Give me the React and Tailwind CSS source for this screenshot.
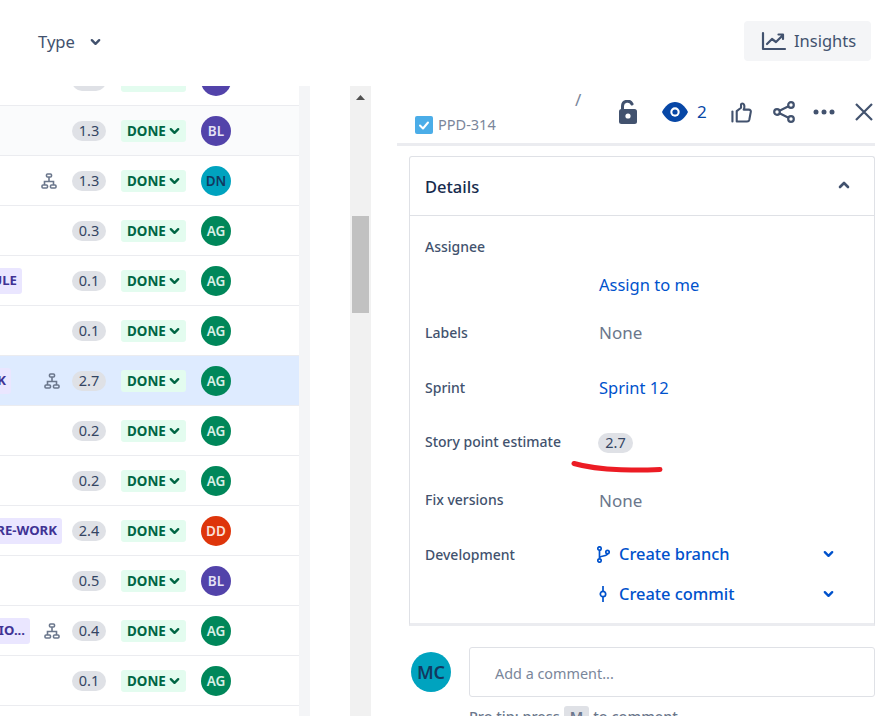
const rows = [
  { est: '1.2', who: '', avatar: 'bg-[#5243aa]' },
  { est: '1.3', who: 'BL', bg: 'bg-[#fafbfc]' },
  { est: '1.3', who: 'DN', tree: 'mr-[15px]' },
  { est: '0.3', who: 'AG' },
  { est: '0.1', who: 'AG', tag: 'ULE', tagWidth: 'w-[22px]' },
  { est: '0.1', who: 'AG' },
  { est: '2.7', who: 'AG', tag: 'K', tagWidth: 'w-[11px]', tree: 'mr-[12px]', bg: 'bg-[#deebff]' },
  { est: '0.2', who: 'AG' },
  { est: '0.2', who: 'AG' },
  { est: '2.4', who: 'DD', tag: 'RE-WORK', tagWidth: 'w-[62px]' },
  { est: '0.5', who: 'BL' },
  { est: '0.4', who: 'AG', tag: 'IO...', tagWidth: 'w-[30px]', tree: 'mr-[12px]' },
  { est: '0.1', who: 'AG' },
]

const avatarColors = {
  BL: 'bg-[#5243aa] text-[#e4e1f5]',
  DN: 'bg-[#00a3bf] text-[#12395f]',
  AG: 'bg-[#00875a] text-[#d9f0e6]',
  DD: 'bg-[#de350b] text-[#fbe0d9]',
}

const Chevron = ({ className = '', up = false }) => (
  <svg viewBox="0 0 12 8" className={className} fill="none" stroke="currentColor" strokeWidth="2.6" strokeLinecap="round" strokeLinejoin="round">
    <path d={up ? 'M2 6l4-4 4 4' : 'M2 2l4 4 4-4'} />
  </svg>
)

const TreeIcon = ({ className = '' }) => (
  <svg viewBox="0 0 16 16" className={className} fill="none" stroke="#6b778c" strokeWidth="1.6">
    <rect x="5.5" y="1" width="5" height="3" rx="1" />
    <path d="M8 4v4M3.500 12V8.500h9V12" />
    <rect x="1" y="12" width="5.500" height="3" rx="1" />
    <rect x="9.500" y="12" width="5.500" height="3" rx="1" />
  </svg>
)

const Row = ({ row }) => (
  <div className={`flex items-center h-[50px] pt-px border-b border-[#ebecf0] ${row.bg || 'bg-white'}`}>
    {row.tag && (
      <div className={`${row.tagWidth} flex justify-end overflow-hidden`}>
        <span className="shrink-0 h-[26px] px-[5px] flex items-center rounded-[3px] bg-[#eae6ff] text-[#403294] text-[13.2px] font-bold whitespace-nowrap">
          {row.tag}
        </span>
      </div>
    )}
    <div className="flex-1" />
    {row.tree && <TreeIcon className={`w-[16px] h-[16px] ${row.tree}`} />}
    <span className="w-[34px] h-[20px] flex items-center justify-center rounded-full bg-[#dfe1e6] text-[#344563] text-[14.5px]">
      {row.est}
    </span>
    <span className="ml-[15px] w-[65px] h-[22px] pl-[6px] flex items-center rounded-[3px] bg-[#e3fcef] text-[#006644] text-[13.4px] font-bold">
      DONE
      <Chevron className="w-[11px] h-[8px] ml-[3px]" />
    </span>
    <span className={`ml-[15px] mr-[68px] w-[30px] h-[30px] flex items-center justify-center rounded-full text-[13.5px] font-semibold ${row.avatar || avatarColors[row.who]}`}>
      {row.who}
    </span>
  </div>
)

const BranchIcon = () => (
  <svg viewBox="0 0 13 17" className="w-[13px] h-[17px] -ml-[2px]" fill="none" stroke="#0052cc" strokeWidth="1.7">
    <circle cx="2.500" cy="2.500" r="1.700" />
    <circle cx="2.500" cy="14.500" r="1.700" />
    <circle cx="10.500" cy="6" r="1.700" />
    <path d="M2.500 4.200v8.600M2.500 12c0-2.500 8-1.500 8-4.300" />
  </svg>
)

const CommitIcon = () => (
  <svg viewBox="0 0 8 18" className="w-[8px] h-[18px]" fill="none" stroke="#0052cc" strokeWidth="1.7">
    <circle cx="4" cy="9" r="2.700" />
    <path d="M4 1v5M4 12v5" />
  </svg>
)

const DetailRow = ({ label, height, pad, children }) => (
  <div className={`flex ${height} ${pad} pl-[15px]`}>
    <div className="w-[174px] h-[24px] flex items-center text-[14px] text-[#42526e] font-medium whitespace-nowrap">{label}</div>
    <div className="flex-1">{children}</div>
  </div>
)

export default function App() {
  return (
    <div className="w-[888px] h-[716px] overflow-hidden bg-white font-['Noto_Sans',sans-serif]">
      <div className="h-[86px] pt-[21px] pl-[38px] pr-[17px] flex items-start justify-between">
        <div className="h-[42px] flex items-center text-[#42526e] text-[16.6px]">
          Type
          <Chevron className="w-[11px] h-[8px] ml-[15px]" />
        </div>
        <div className="w-[127px] h-10 flex items-center pl-[17px] rounded-[4px] bg-[#f4f5f7] text-[#42526e] text-[16.5px]">
          <svg viewBox="0 0 26 20" className="w-[26px] h-[20px] mr-[7px]" fill="none" stroke="#42526e" strokeWidth="2.200" strokeLinecap="round" strokeLinejoin="round">
            <path d="M2 2v16h22" />
            <path d="M6 13l5-5 4 3 7-7M17.500 3.500H22V8" />
          </svg>
          Insights
        </div>
      </div>

      <div className="flex h-[630px]">
        <div className="w-[299px] overflow-hidden">
          <div className="-mt-[30px]">
            {rows.map((row, i) => (
              <Row key={i} row={row} />
            ))}
          </div>
        </div>
        <div className="w-[11px] bg-[#f4f5f7]" />
        <div className="w-[40px]" />
        <div className="w-[21px] bg-[#f1f1f1] flex flex-col items-center pt-[9px]">
          <svg viewBox="0 0 9 5" className="w-[9px] h-[5px]">
            <path d="M4.500 0L9 5H0z" fill="#505050" />
          </svg>
          <div className="mt-[116px] w-[17px] h-[97px] bg-[#c1c1c1]" />
        </div>
        <div className="w-[26px]" />

        <div className="relative w-[478px]">
          <div className="h-[60px] flex border-b-[3px] border-[#ebecf0]">
            <div className="w-[210px] pl-[18px] flex flex-col">
              <div className="pl-[160px] mt-[2px] h-[24px] text-[#7a869a] text-[17px] leading-[24px]">/</div>
              <div className="flex items-center mt-[2px]">
                <svg viewBox="0 0 18 18" className="w-[18px] h-[18px]">
                  <rect width="18" height="18" rx="2" fill="#4bade8" />
                  <path d="M5 9.500l3 3 5-6" fill="none" stroke="#fff" strokeWidth="2" strokeLinecap="round" strokeLinejoin="round" />
                </svg>
                <span className="ml-[5px] text-[#7a869a] text-[14.5px]">PPD-314</span>
              </div>
            </div>
            <div className="flex items-center h-[52px] pl-[12px]">
              <svg viewBox="0 0 18 24" className="w-[18px] h-[24px]">
                <path d="M3.500 10V6a5 5 0 0 1 9.500-2" fill="none" stroke="#42526e" strokeWidth="3" strokeLinecap="round" />
                <rect x="0" y="9" width="18" height="15" rx="2.500" fill="#42526e" />
                <circle cx="9" cy="16" r="2.600" fill="#fff" />
              </svg>
              <svg viewBox="0 0 26 20" className="w-[26px] h-[20px] ml-[25px]">
                <path d="M0 10C3 4 7.500 0 13 0s10 4 13 10c-3 6-7.500 10-13 10S3 16 0 10z" fill="#0747a6" />
                <circle cx="13" cy="10" r="4.700" fill="#fff" />
                <circle cx="13" cy="10" r="2.600" fill="#0747a6" />
              </svg>
              <span className="ml-[9px] text-[#0747a6] text-[17px]">2</span>
              <svg viewBox="0 0 22 22" className="w-[21px] h-[21px] ml-[24px]" fill="none" stroke="#42526e" strokeWidth="2.200" strokeLinejoin="round" strokeLinecap="round">
                <path d="M1.500 10v10.500" />
                <path d="M6 20.500V9.500L10.500 6V2.500c0-1 2.500-1.500 3.200.5.500 1.500.2 3.700-.4 5h5.200c1.800 0 2.500 1.200 2.200 2.500l-1.500 8c-.3 1.300-1.200 2-2.400 2z" />
              </svg>
              <svg viewBox="0 0 22 22" className="w-[22px] h-[22px] ml-[21px]" fill="none" stroke="#42526e" strokeWidth="2.200">
                <circle cx="18" cy="4" r="2.800" />
                <circle cx="4" cy="11" r="2.800" />
                <circle cx="18" cy="18" r="2.800" />
                <path d="M6.500 9.700l9-4.400M6.500 12.300l9 4.400" />
              </svg>
              <svg viewBox="0 0 22 6" className="w-[22px] h-[6px] ml-[18px]" fill="#42526e">
                <circle cx="3" cy="3" r="2.500" />
                <circle cx="11" cy="3" r="2.500" />
                <circle cx="19" cy="3" r="2.500" />
              </svg>
              <svg viewBox="0 0 18 18" className="w-[18px] h-[18px] ml-[20px]" fill="none" stroke="#42526e" strokeWidth="2.200">
                <path d="M1 1l16 16M17 1L1 17" />
              </svg>
            </div>
          </div>

          <div className="ml-[12px] mt-[10px] h-[470px] rounded-t-[3px] border border-b-[3px] border-[#dfe1e6] border-b-[#ebecf0]">
            <div className="h-[59px] pl-[15px] pr-[24px] flex items-center justify-between border-b border-[#dfe1e6]">
              <span className="mt-[3px] text-[#172b4d] text-[16.5px] font-medium">Details</span>
              <Chevron up className="w-[12px] h-[8px] -mt-[2px] text-[#42526e]" />
            </div>
            <DetailRow label="Assignee" height="h-[94px]" pad="pt-[18px]">
              <div className="mt-[39px] h-[24px] flex items-center text-[#0052cc] text-[16.5px]">Assign to me</div>
            </DetailRow>
            <DetailRow label="Labels" height="h-[50px]" pad="pt-[10px]">
              <div className="mt-px h-[24px] flex items-center text-[#6b778c] text-[17px]">None</div>
            </DetailRow>
            <DetailRow label="Sprint" height="h-[55px]" pad="pt-[15px]">
              <div className="mt-px h-[24px] flex items-center text-[#0052cc] text-[16.5px]">Sprint 12</div>
            </DetailRow>
            <DetailRow label="Story point estimate" height="h-[55px]" pad="pt-[14px]">
              <div className="mt-[2px] -ml-px h-[24px] flex items-center">
                <span className="w-[35px] h-[20px] flex items-center justify-center rounded-full bg-[#dfe1e6] text-[#344563] text-[14.5px]">2.7</span>
              </div>
            </DetailRow>
            <DetailRow label="Fix versions" height="h-[55px]" pad="pt-[17px]">
              <div className="mt-[2px] h-[24px] flex items-center text-[#6b778c] text-[17px]">None</div>
            </DetailRow>
            <DetailRow label="Development" height="h-[100px]" pad="pt-[17px]">
              <div className="flex items-center h-[24px] pr-[40px] text-[#0052cc] text-[16.4px] font-medium">
                <span className="w-[20px] flex"><BranchIcon /></span>
                Create branch
                <Chevron className="w-[11px] h-[8px] ml-auto" />
              </div>
              <div className="flex items-center h-[24px] mt-[16px] pr-[40px] text-[#0052cc] text-[16.4px] font-medium">
                <span className="w-[20px] flex"><CommitIcon /></span>
                Create commit
                <Chevron className="w-[11px] h-[8px] ml-auto" />
              </div>
            </DetailRow>
          </div>

          <div className="flex mt-[21px]">
            <div className="ml-[14px] mt-[5px] w-10 h-10 shrink-0 flex items-center justify-center rounded-full bg-[#00a3bf] text-[#12395f] text-[18px] font-semibold">
              MC
            </div>
            <div className="ml-[18px] flex-1">
              <div className="h-[50px] pl-[25px] pt-[3px] flex items-center rounded-[3px] border border-[#dfe1e6] text-[#7a869a] text-[14.4px]">
                Add a comment...
              </div>
              <div className="mt-[9px] flex items-center text-[#6b778c] text-[14.5px] font-medium whitespace-nowrap">
                Pro tip: press
                <span className="mx-[4px] px-[6px] rounded-[3px] bg-[#dfe1e6] font-semibold">M</span>
                to comment
              </div>
            </div>
          </div>

          {/* hand drawn mark under the estimate */}
          <svg viewBox="0 0 92 13" className="absolute left-[174px] top-[374px] w-[92px] h-[13px]" fill="none" stroke="#ec1c24" strokeWidth="5" strokeLinecap="round">
            <path d="M3 3.500C15 7 30 9 50 9.800c12 .4 25 0 39-.3" />
          </svg>
        </div>
      </div>
    </div>
  )
}
